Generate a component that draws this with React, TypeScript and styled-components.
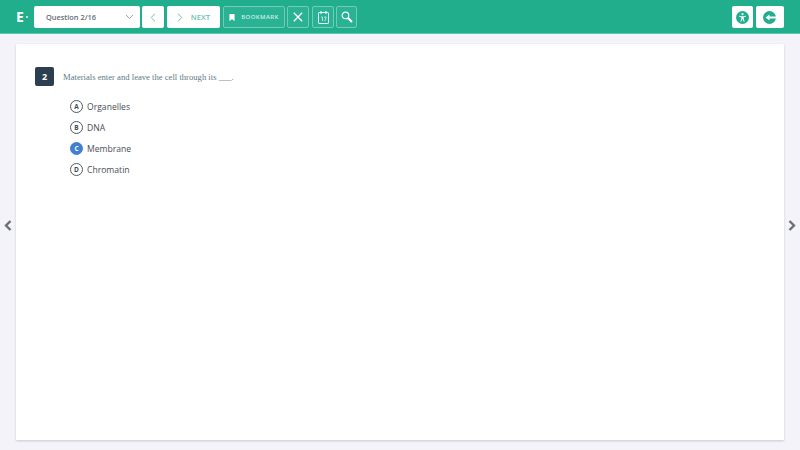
import React from "react";
import styled, { createGlobalStyle } from "styled-components";

const Global = createGlobalStyle`
  html, body { margin: 0; padding: 0; width: 800px; height: 450px; overflow: hidden; background: #f3f3f9; }
  * { box-sizing: border-box; }
`;

const Page = styled.div`
  width: 800px;
  height: 450px;
  display: flex;
  flex-direction: column;
  font-family: "Open Sans", sans-serif;
  background: #f3f3f9;
`;

const TopBar = styled.header`
  height: 34px;
  flex: none;
  background: #20ae8d;
  border-bottom: 1px solid #5cc4ab;
  padding: 6px 16px 0 16px;
  display: flex;
  align-items: flex-start;
`;

const Logo = styled.div`
  width: 18px;
  height: 22px;
  display: flex;
  align-items: center;
  color: #fff;
  font-family: "Open Sans", sans-serif;
  font-weight: 700;
  font-size: 14px;
  line-height: 1;
  position: relative;
  &::after {
    content: "";
    position: absolute;
    left: 10px;
    top: 10px;
    width: 2px;
    height: 2px;
    border-radius: 50%;
    background: #dff4ee;
  }
`;

const Select = styled.div`
  width: 106px;
  height: 22px;
  background: #fff;
  border-radius: 2px;
  display: flex;
  align-items: center;
  justify-content: space-between;
  padding: 0 6px 0 12px;
  font-size: 7.4px;
  font-weight: 600;
  color: #626c75;
`;

const WhiteBtn = styled.div<{ $w: number; $ml?: number }>`
  width: ${(p) => p.$w}px;
  margin-left: ${(p) => p.$ml ?? 2}px;
  height: 22px;
  background: #fff;
  border-radius: 2px;
  display: flex;
  align-items: center;
  justify-content: center;
  gap: 8px;
  color: #6cc3ae;
  font-size: 7.7px;
  font-weight: 600;
`;

const OutlineBtn = styled.div<{ $w: number; $ml?: number }>`
  width: ${(p) => p.$w}px;
  margin-left: ${(p) => p.$ml ?? 2}px;
  height: 22px;
  border: 1px solid #74ccb7;
  border-radius: 2px;
  background: #29b294;
  display: flex;
  align-items: center;
  justify-content: center;
  gap: 6px;
  color: #fff;
`;

const BookmarkLabel = styled.span`
  font-size: 6px;
  font-weight: 600;
  letter-spacing: 0.4px;
  color: #cdeee6;
`;

const Spacer = styled.div`
  flex: 1;
`;

const Main = styled.main`
  flex: 1;
  padding: 10px 16px;
  display: flex;
  position: relative;
`;

const Card = styled.section`
  flex: 1;
  background: #fff;
  box-shadow: 0 1px 2px rgba(60, 70, 90, 0.22);
  padding: 23px 19px;
`;

const QuestionRow = styled.div`
  display: flex;
  align-items: center;
  gap: 9px;
`;

const QuestionNumber = styled.div`
  width: 19px;
  height: 19px;
  border-radius: 2px;
  background: #2c3e50;
  color: #fff;
  font-size: 9px;
  font-weight: 700;
  display: flex;
  align-items: center;
  justify-content: center;
`;

const Stem = styled.div`
  font-family: "Liberation Serif", serif;
  font-size: 8.65px;
  color: #607a86;
`;

const Options = styled.div`
  margin: 14px 0 0 35px;
  display: flex;
  flex-direction: column;
  gap: 8px;
`;

const Option = styled.div`
  display: flex;
  align-items: center;
  height: 13px;
  gap: 4px;
  font-size: 8.6px;
  color: #454e56;
`;

const Bubble = styled.div<{ $on?: boolean }>`
  width: 13px;
  height: 13px;
  border-radius: 50%;
  border: 1px solid ${(p) => (p.$on ? "#3f80d0" : "#50585f")};
  background: ${(p) => (p.$on ? "#3f80d0" : "#fff")};
  color: ${(p) => (p.$on ? "#fff" : "#404a52")};
  font-size: 6.5px;
  font-weight: 700;
  display: flex;
  align-items: center;
  justify-content: center;
`;

const Arrow = styled.svg<{ $side: "left" | "right" }>`
  position: absolute;
  top: 186px;
  ${(p) => p.$side}: 4px;
`;

const options = [
  { k: "A", t: "Organelles" },
  { k: "B", t: "DNA" },
  { k: "C", t: "Membrane", on: true },
  { k: "D", t: "Chromatin" },
];

export default function App() {
  return (
    <Page>
      <Global />
      <TopBar>
        <Logo>E</Logo>
        <Select>
          Question 2/16
          <svg width="9" height="6" viewBox="0 0 9 6" fill="none" stroke="#98a1a8" strokeWidth="1">
            <path d="M1 1l3.5 3.5L8 1" />
          </svg>
        </Select>
        <WhiteBtn $w={22}>
          <svg width="6" height="9" viewBox="0 0 6 9" fill="none" stroke="#6cc3ae" strokeWidth="1">
            <path d="M5 .7L1.2 4.5 5 8.3" />
          </svg>
        </WhiteBtn>
        <WhiteBtn $w={53} $ml={3}>
          <svg width="6" height="9" viewBox="0 0 6 9" fill="none" stroke="#6cc3ae" strokeWidth="1">
            <path d="M1 .7l3.8 3.8L1 8.3" />
          </svg>
          NEXT
        </WhiteBtn>
        <OutlineBtn $w={62} $ml={3}>
          <svg width="6" height="7" viewBox="0 0 7 8" fill="#fff">
            <path d="M.5 0h6v8L3.5 6 .5 8z" />
          </svg>
          <BookmarkLabel>BOOKMARK</BookmarkLabel>
        </OutlineBtn>
        <OutlineBtn $w={22}>
          <svg width="10" height="10" viewBox="0 0 10 10" fill="none" stroke="#fff" strokeWidth="1.4">
            <path d="M.8.8l8.4 8.4M9.2.8L.8 9.2" />
          </svg>
        </OutlineBtn>
        <OutlineBtn $w={22} $ml={3}>
          <svg width="11" height="13" viewBox="0 0 11 13" fill="none" stroke="#e3f5f0" strokeWidth="1">
            <rect x=".5" y="1.5" width="10" height="11" rx="0.6" />
            <path d="M3 0v3M8 0v3" strokeWidth="1.3" />
            <path d="M3.2 6h1.3v4M6.2 6h2L6.8 10" strokeWidth="0.8" />
          </svg>
        </OutlineBtn>
        <OutlineBtn $w={21}>
          <svg width="12" height="12" viewBox="0 0 14 14" fill="none" stroke="#fff" strokeWidth="1.3">
            <circle cx="5.2" cy="5.2" r="3.9" />
            <path d="M8.2 8.2l4.6 4.6" strokeWidth="2.4" />
          </svg>
        </OutlineBtn>
        <Spacer />
        <WhiteBtn $w={21}>
          <svg width="13" height="13" viewBox="0 0 13 13">
            <circle cx="6.5" cy="6.5" r="6.5" fill="#20ae8d" />
            <circle cx="6.5" cy="3.2" r="1.1" fill="#fff" />
            <path d="M3 4.7l2.4.6h2.2l2.4-.6v.9l-2.3.7v1.6l1 2.6-.9.2-1.2-2.6h-.2l-1.2 2.6-.9-.2 1-2.6V6.3L3 5.6z" fill="#fff" />
          </svg>
        </WhiteBtn>
        <WhiteBtn $w={28} $ml={3}>
          <svg width="14" height="13" viewBox="0 0 14 13">
            <circle cx="6.5" cy="6.5" r="6.5" fill="#20ae8d" />
            <path d="M2.5 6.5L6.5 3.6v1.9h7v2h-7v1.9z" fill="#fff" />
          </svg>
        </WhiteBtn>
      </TopBar>
      <Main>
        <Arrow $side="left" width="8" height="11" viewBox="0 0 8 11" fill="none" stroke="#6a7078" strokeWidth="2.4">
          <path d="M6.5 1L2 5.5 6.5 10" />
        </Arrow>
        <Card>
          <QuestionRow>
            <QuestionNumber>2</QuestionNumber>
            <Stem>Materials enter and leave the cell through its ___.</Stem>
          </QuestionRow>
          <Options>
            {options.map((o) => (
              <Option key={o.k}>
                <Bubble $on={o.on}>{o.k}</Bubble>
                {o.t}
              </Option>
            ))}
          </Options>
        </Card>
        <Arrow $side="right" width="8" height="11" viewBox="0 0 8 11" fill="none" stroke="#6a7078" strokeWidth="2.4">
          <path d="M1.5 1L6 5.5 1.5 10" />
        </Arrow>
      </Main>
    </Page>
  );
}
